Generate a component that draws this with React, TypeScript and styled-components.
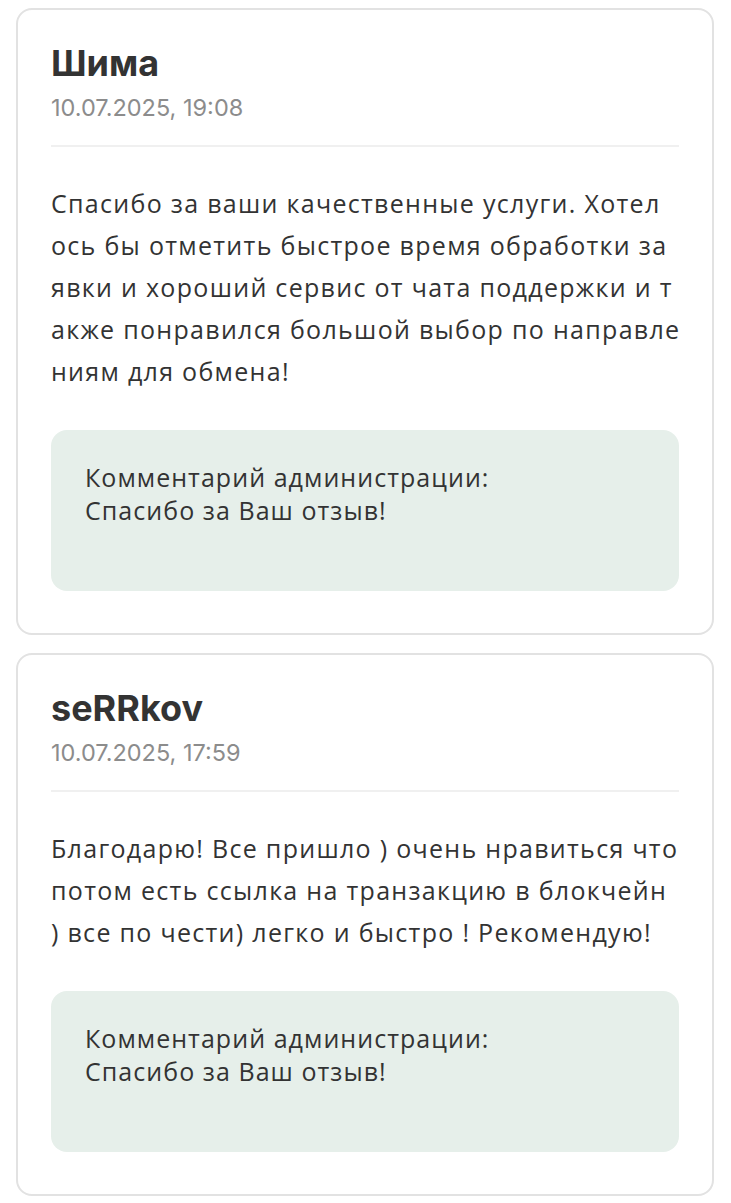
import styled, { createGlobalStyle } from 'styled-components'

const GlobalStyle = createGlobalStyle`
  body {
    margin: 0;
    background: #fff;
  }
`

type Review = {
  author: string
  date: string
  // lines as they are broken on the site (break-all in a fixed column)
  lines: string[]
  reply: string
}

const reviews: Review[] = [
  {
    author: 'Шима',
    date: '10.07.2025, 19:08',
    lines: [
      'Спасибо за ваши качественные услуги. Хотел',
      'ось бы отметить быстрое время обработки за',
      'явки и хороший сервис от чата поддержки и т',
      'акже понравился большой выбор по направле',
      'ниям для обмена!'
    ],
    reply: 'Спасибо за Ваш отзыв!'
  },
  {
    author: 'seRRkov',
    date: '10.07.2025, 17:59',
    lines: [
      'Благодарю! Все пришло ) очень нравиться что',
      'потом есть ссылка на транзакцию в блокчейн',
      ') все по чести) легко и быстро ! Рекомендую!'
    ],
    reply: 'Спасибо за Ваш отзыв!'
  }
]

const List = styled.div`
  display: flex;
  flex-direction: column;
  gap: 18px;
  padding: 8px 17px 10px 16px;
`

const Card = styled.article`
  border: 2px solid #e2e2e2;
  border-radius: 16px;
  padding: 32px 33px 42px;
`

const Author = styled.h3`
  margin: 0;
  font-family: Inter, 'Liberation Sans', sans-serif;
  font-weight: 700;
  font-size: 36px;
  line-height: 42px;
  color: #333;
`

const Date = styled.div`
  margin-top: 10px;
  font-family: Inter, 'Liberation Sans', sans-serif;
  font-size: 23.5px;
  line-height: 28px;
  color: #8c8c8c;
`

const Divider = styled.hr`
  margin: 23px 0 0;
  border: 0;
  border-top: 2px solid #f0f0f0;
`

const Text = styled.p`
  margin: 35px 0 0;
  font-family: 'Open Sans', sans-serif;
  font-size: 25px;
  letter-spacing: 1.3px;
  line-height: 42px;
  color: #333;
`

const Line = styled.span`
  display: block;
  white-space: nowrap;
`

const Reply = styled.div`
  margin-top: 38px;
  background: #e6efea;
  border-radius: 16px;
  padding: 31px 34px 64px;
  font-family: 'Open Sans', sans-serif;
  font-size: 25px;
  letter-spacing: 1.05px;
  line-height: 33px;
  color: #333;
`

export default function App() {
  return (
    <>
      <GlobalStyle />
      <List>
        {reviews.map(r => (
          <Card key={r.author}>
            <Author>{r.author}</Author>
            <Date>{r.date}</Date>
            <Divider />
            <Text>
              {r.lines.map((line, i) => (
                <Line key={i}>{line}</Line>
              ))}
            </Text>
            <Reply>
              Комментарий администрации:
              <br />
              {r.reply}
            </Reply>
          </Card>
        ))}
      </List>
    </>
  )
}
